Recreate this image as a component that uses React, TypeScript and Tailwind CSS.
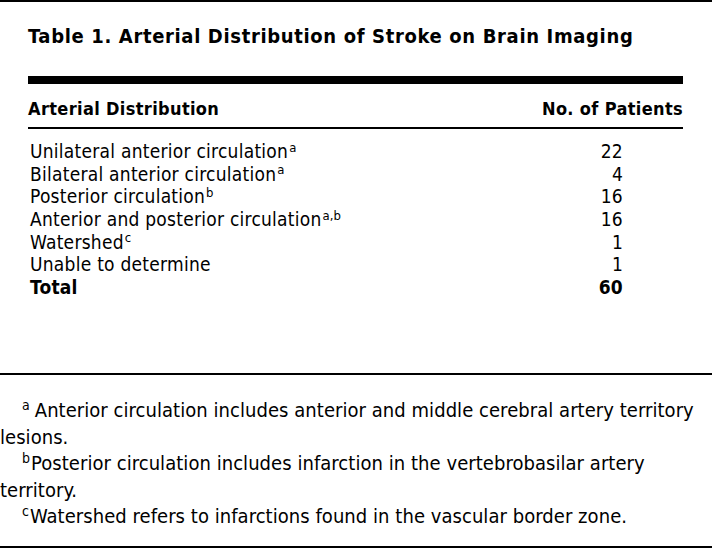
import React from "react";

const rows = [
  { label: "Unilateral anterior circulation", sup: "a", value: "22" },
  { label: "Bilateral anterior circulation", sup: "a", value: "4" },
  { label: "Posterior circulation", sup: "b", value: "16" },
  { label: "Anterior and posterior circulation", sup: "a,b", value: "16" },
  { label: "Watershed", sup: "c", value: "1" },
  { label: "Unable to determine", sup: "", value: "1" },
];

const notes = [
  {
    sup: "a",
    text: "Anterior circulation includes anterior and middle cerebral artery territory lesions.",
    gap: "mr-[5px]",
  },
  {
    sup: "b",
    text: "Posterior circulation includes infarction in the vertebrobasilar artery territory.",
    gap: "mr-[1px]",
  },
  {
    sup: "c",
    text: "Watershed refers to infarctions found in the vascular border zone.",
    gap: "mr-[1px]",
  },
];

const App = () => {
  return (
    <div
      className="w-[712px] h-[548px] bg-white text-black border-t-2 border-b-2 border-black flex flex-col"
      style={{ fontFamily: "'DejaVu Sans Condensed', 'Liberation Sans', sans-serif" }}
    >
      {/* Table */}
      <div className="pl-[28px] pr-[29px] pt-[22px] h-[371px]">
        <h1 className="text-[20px] leading-[24px] font-bold tracking-[0.65px] whitespace-nowrap">
          Table 1. Arterial Distribution of Stroke on Brain Imaging
        </h1>

        <div className="mt-[28px] h-[8px] bg-black" />

        {/* Header */}
        <div className="flex justify-between items-end h-[45px] pb-[7px] border-b-2 border-black text-[18px] leading-[22px] font-bold tracking-[0.35px]">
          <span>Arterial Distribution</span>
          <span>No. of Patients</span>
        </div>

        {/* Rows */}
        <div className="pt-[11px] text-[19px] leading-[22.7px] tracking-[0.25px]">
          {rows.map(row => (
            <div key={row.label} className="flex justify-between h-[22.7px]">
              <span className="pl-[2px]">
                {row.label}
                {row.sup && (
                  <sup className="text-[13px] leading-none ml-[1px] tracking-normal">
                    {row.sup}
                  </sup>
                )}
              </span>
              <span className="w-[30px] mr-[60px] text-right">{row.value}</span>
            </div>
          ))}
          <div className="flex justify-between h-[22.7px] font-bold">
            <span className="pl-[2px]">Total</span>
            <span className="w-[30px] mr-[60px] text-right">60</span>
          </div>
        </div>
      </div>

      {/* Footnotes */}
      <div className="border-t-2 border-black pt-[22px] pr-[12px] text-[20px] leading-[26.5px] tracking-[0.05px]">
        {notes.map(note => (
          <p key={note.sup} className="indent-[22px]">
            <sup className={`text-[14px] leading-none ${note.gap}`}>{note.sup}</sup>
            {note.text}
          </p>
        ))}
      </div>
    </div>
  );
};

export default App;
